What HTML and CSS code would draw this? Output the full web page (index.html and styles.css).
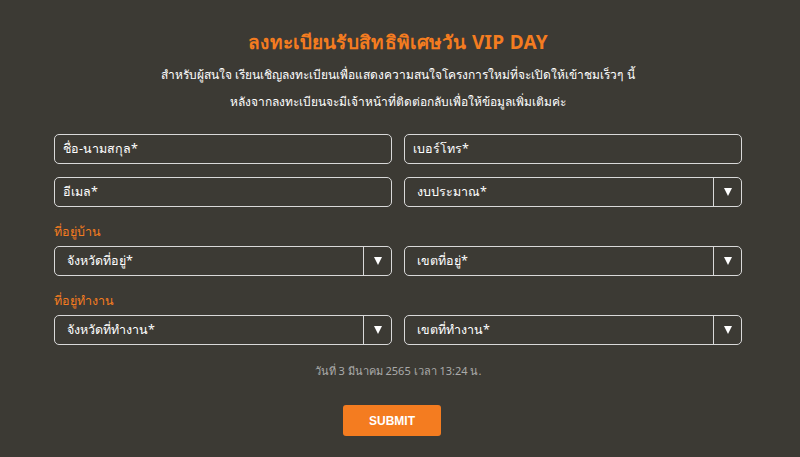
FILE: index.html
```html
<!DOCTYPE html>
<html lang="th">
<head>
  <meta charset="UTF-8">
  <meta name="viewport" content="width=device-width, initial-scale=1.0">
  <title>VIP DAY</title>
  <link rel="stylesheet" href="styles.css">
</head>
<body>

<div class="register">
  <h1>ลงทะเบียนรับสิทธิพิเศษวัน VIP DAY</h1>
  <p class="intro">สำหรับผู้สนใจ เรียนเชิญลงทะเบียนเพื่อแสดงความสนใจโครงการใหม่ที่จะเปิดให้เข้าชมเร็วๆ นี้<br>หลังจากลงทะเบียนจะมีเจ้าหน้าที่ติดต่อกลับเพื่อให้ข้อมูลเพิ่มเติมค่ะ</p>

  <div class="grid">
    <div class="field">ชื่อ-นามสกุล*</div>
    <div class="field">เบอร์โทร*</div>
    <div class="field">อีเมล*</div>
    <div class="field select"><span>งบประมาณ*</span><i class="arrow"></i></div>
  </div>

  <div class="group-label">ที่อยู่บ้าน</div>
  <div class="grid">
    <div class="field select"><span>จังหวัดที่อยู่*</span><i class="arrow"></i></div>
    <div class="field select"><span>เขตที่อยู่*</span><i class="arrow"></i></div>
  </div>

  <div class="group-label">ที่อยู่ทำงาน</div>
  <div class="grid">
    <div class="field select"><span>จังหวัดที่ทำงาน*</span><i class="arrow"></i></div>
    <div class="field select"><span>เขตที่ทำงาน*</span><i class="arrow"></i></div>
  </div>

  <p class="date">วันที่ 3 มีนาคม 2565 เวลา 13:24 น.</p>

  <button class="submit">SUBMIT</button>
</div>

</body>
</html>
```

FILE: styles.css
```css
body {
  font-family: 'Noto Sans', 'Liberation Sans', sans-serif;
  background-color: #3c3a34;
  color: #fff;
  margin: 0;
  padding: 0;
}

.register {
  width: 688px;
  margin: 0 auto;
  padding-top: 28px;
  position: relative;
  left: -2px;
}

h1 {
  color: #f47c20;
  font-size: 19px;
  font-weight: bold;
  text-align: center;
  margin: 0;
  line-height: 28px;
  letter-spacing: 0.3px;
}

.intro {
  text-align: center;
  font-size: 12px;
  line-height: 27px;
  margin: 5px 0 19px;
}

.grid {
  display: grid;
  grid-template-columns: 1fr 1fr;
  column-gap: 12px;
  row-gap: 13px;
}

.field {
  height: 30px;
  box-sizing: border-box;
  border: 1px solid #d9d9d9;
  border-radius: 5px;
  font-size: 12.5px;
  display: flex;
  align-items: center;
  padding-left: 8px;
}

.select {
  padding-left: 12px;
}

.select span {
  flex: 1;
}

.arrow {
  width: 27px;
  height: 100%;
  border-left: 1px solid #d9d9d9;
  display: flex;
  align-items: center;
  justify-content: center;
}

.arrow::after {
  content: '';
  border-left: 4px solid transparent;
  border-right: 4px solid transparent;
  border-top: 8px solid #fff;
}

.group-label {
  color: #f47c20;
  font-size: 12.5px;
  line-height: 18px;
  margin: 16px 0 5px;
}

.date {
  text-align: center;
  color: #aaa;
  font-size: 11px;
  margin: 18px 0 0;
  line-height: 16px;
}

.submit {
  display: block;
  margin: 26px auto 0;
  width: 98px;
  height: 31px;
  background-color: #f47c20;
  border: none;
  border-radius: 3px;
  color: #fff;
  font-family: 'Liberation Sans', sans-serif;
  font-size: 12px;
  font-weight: bold;
  cursor: pointer;
  position: relative;
  left: -6px;
}
```
